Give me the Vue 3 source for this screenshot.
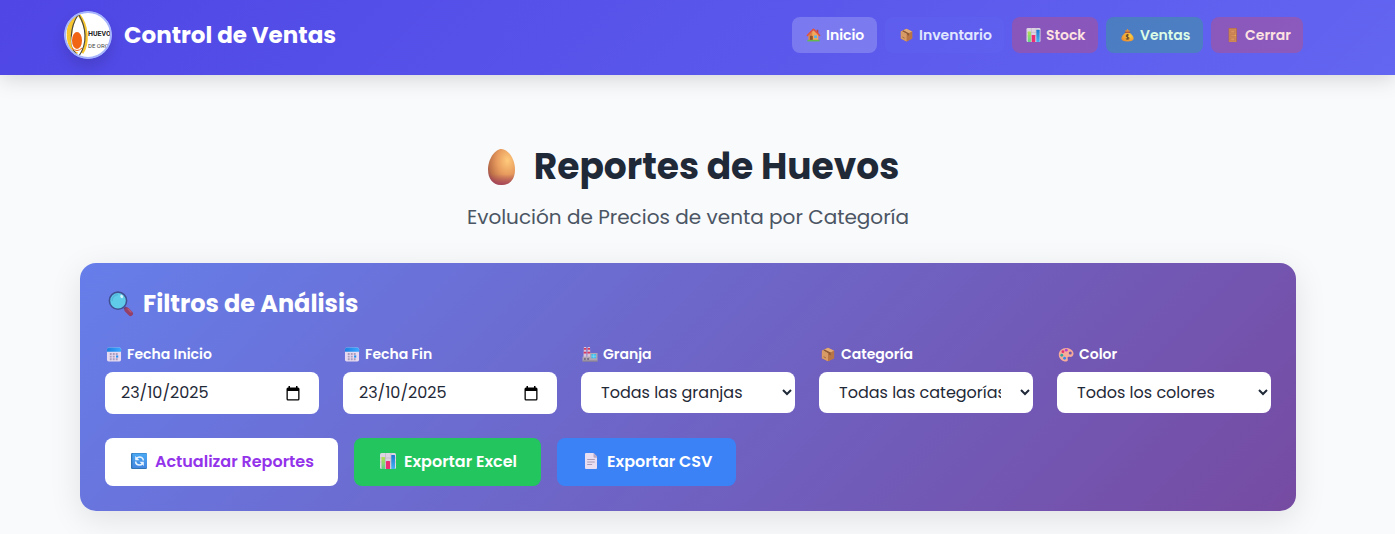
<script setup>
import { ref } from 'vue'

const links = [
  { id: 'home', label: 'Inicio', icon: 'house', kind: 'active' },
  { id: 'inventory', label: 'Inventario', icon: 'box', kind: 'plain' },
  { id: 'stock', label: 'Stock', icon: 'chart', kind: 'red' },
  { id: 'sales', label: 'Ventas', icon: 'money', kind: 'green' },
  { id: 'logout', label: 'Cerrar', icon: 'door', kind: 'red' },
]

const dates = ref([
  { id: 'start', label: 'Fecha Inicio', value: '23/10/2025' },
  { id: 'end', label: 'Fecha Fin', value: '23/10/2025' },
])

const selects = [
  { id: 'farm', label: 'Granja', icon: 'factory', option: 'Todas las granjas' },
  { id: 'category', label: 'Categoría', icon: 'box', option: 'Todas las categorías' },
  { id: 'color', label: 'Color', icon: 'palette', option: 'Todos los colores' },
]

const actions = [
  { label: 'Actualizar Reportes', icon: 'refresh', kind: 'white' },
  { label: 'Exportar Excel', icon: 'chart', kind: 'green' },
  { label: 'Exportar CSV', icon: 'page', kind: 'blue' },
]
</script>

<template>
  <div class="page">
    <svg class="sprite" aria-hidden="true">
      <defs>
        <radialGradient id="eggFill" cx="0.72" cy="0.32" r="0.8">
          <stop offset="0" stop-color="#ffcb7c" />
          <stop offset="0.5" stop-color="#e79a5d" />
          <stop offset="0.85" stop-color="#bd7148" />
          <stop offset="1" stop-color="#a5544f" />
        </radialGradient>
        <linearGradient id="eggShade" x1="0" y1="0" x2="0" y2="1">
          <stop offset="0.7" stop-color="#a33d60" stop-opacity="0" />
          <stop offset="1" stop-color="#a33d60" stop-opacity="0.8" />
        </linearGradient>
        <linearGradient id="greenBar" x1="0" y1="0" x2="0" y2="1">
          <stop offset="0" stop-color="#b5e04f" /><stop offset="1" stop-color="#5fd08a" />
        </linearGradient>
        <linearGradient id="blueBar" x1="0" y1="0" x2="0" y2="1">
          <stop offset="0" stop-color="#1b78d0" /><stop offset="1" stop-color="#46b4f4" />
        </linearGradient>
        <linearGradient id="calTop" x1="0" y1="0" x2="1" y2="0">
          <stop offset="0" stop-color="#1d7fe0" /><stop offset="1" stop-color="#3ba8ff" />
        </linearGradient>
        <linearGradient id="syncFill" x1="0" y1="0" x2="0" y2="1">
          <stop offset="0" stop-color="#4aa9f5" /><stop offset="1" stop-color="#4487e0" />
        </linearGradient>
        <radialGradient id="bagFill" cx="0.65" cy="0.4" r="0.7">
          <stop offset="0" stop-color="#ffd23e" /><stop offset="1" stop-color="#e78b32" />
        </radialGradient>
      </defs>
      <symbol id="i-house" viewBox="0 0 16 16">
        <path d="M11.500 2h2v4h-2z" fill="#b94a3d" />
        <path d="M2.500 7.500 8 2.500l5.500 5V14h-11z" fill="#f2a75d" />
        <path d="M2.500 7.500 6.500 4v10h-4z" fill="#d98245" />
        <path d="M1 8.500 7.500 1.800q.5-.5 1 0L15 8.500" fill="none" stroke="#e2533c" stroke-width="1.800" stroke-linecap="round" stroke-linejoin="round" />
        <path d="M4 9h3.200v5H4z" fill="#93532f" />
        <path d="M8.700 8.500h3.300v3H8.700z" fill="#55b5ea" />
        <path d="M1 13.500h14v1.800H1z" fill="#63b94c" />
      </symbol>
      <symbol id="i-box" viewBox="0 0 16 16">
        <path d="M8 .8 14.500 4v8L8 15.300 1.500 12V4z" fill="#c58550" />
        <path d="M8 .8 14.500 4 8 7.300 1.500 4z" fill="#e3ab76" />
        <path d="M8 7.300 14.500 4v8L8 15.300z" fill="#b97546" />
        <path d="M1.500 4 8 7.300v8L1.500 12z" fill="#d89b65" />
        <path d="m4.300 2.600 6.500 3.300v3l-2-1V6.800L3 3.700z" fill="#8e5834" />
        <path d="m3.300 10.300 2.500 1.300" stroke="#9f683e" />
      </symbol>
      <symbol id="i-chart" viewBox="0 0 16 16">
        <rect width="16" height="16" rx="1.500" fill="#ddd4e2" />
        <path d="M0 5h16M0 9h16M5.500 0v16M11 0v16" stroke="#b9aec4" stroke-width=".6" />
        <rect x="1.500" y="4" width="3.500" height="12" rx=".5" fill="url(#greenBar)" />
        <rect x="6" y="8" width="4" height="8" rx=".5" fill="#ec2f73" />
        <rect x="11.300" y="2" width="3.700" height="14" rx=".5" fill="url(#blueBar)" />
      </symbol>
      <symbol id="i-money" viewBox="0 0 16 16">
        <path d="M5 2.200 6.500 3 8 .8 9.500 3 11 2.200 9.800 5H6.200z" fill="#e98f31" />
        <path d="M6 5h4c2.600 1.600 5 4.100 5 7 0 2.400-2.300 3.300-7 3.300S1 14.400 1 12c0-2.900 2.400-5.400 5-7z" fill="url(#bagFill)" />
        <path d="M5.500 4.800h5" stroke="#a94b35" stroke-width="1.200" stroke-linecap="round" />
        <path d="M9.700 8.300C9 7.500 6.500 7.500 6.500 9s3.200.9 3.200 2.500-2.800 1.500-3.500.5M8 6.900v6.600" fill="none" stroke="#70512f" stroke-width="1.200" />
      </symbol>
      <symbol id="i-door" viewBox="0 0 16 16">
        <rect x="3.500" y="0" width="9.500" height="16" rx=".5" fill="#b06a4b" />
        <rect x="4.300" y=".8" width="7.900" height="15.200" fill="#d08a57" />
        <path d="M6 2.500h4.500v3H6zM6 7.500h4.500v2H6zM6 11.500h4.500v3H6z" fill="#d9945f" stroke="#b87149" stroke-width=".5" />
        <circle cx="11" cy="8.500" r=".7" fill="#ffc13b" />
      </symbol>
      <symbol id="i-search" viewBox="0 0 26 26">
        <path d="m16.500 16.500 3 3" stroke="#6b4170" stroke-width="3" />
        <path d="m19 19 3.500 3.500" stroke="#943f68" stroke-width="5" stroke-linecap="round" />
        <path d="m20 18 3 3" stroke="#b95b76" stroke-width="1.200" stroke-linecap="round" />
        <circle cx="10" cy="9.700" r="8.600" fill="#5fcbe8" stroke="#404f92" stroke-width="1.600" />
        <path d="M4 10c0-4 3-6.500 6-6.500" fill="none" stroke="#53b7dc" stroke-width="1.500" />
        <ellipse cx="13.700" cy="5.500" rx="1.300" ry="1.800" fill="#d2f5ff" transform="rotate(-30 13.700 5.500)" />
      </symbol>
      <symbol id="i-calendar" viewBox="0 0 16 16">
        <rect x=".5" y=".5" width="15" height="15" rx="1.800" fill="#e6d9f0" />
        <path d="M.5 5V2.500q0-2 2-2h11q2 0 2 2V5z" fill="url(#calTop)" />
        <path d="M3.500 6.500h2v2h-2zM6.700 6.500h2v2h-2zM9.900 6.500h2v2h-2zM3.500 9.300h2v2h-2zM6.700 9.300h2v2h-2zM3.500 12h2v2h-2zM6.700 12h2v2h-2zM9.900 12h2v2h-2z" fill="#a99dbf" />
        <path d="M10.200 9H12.500v2.300h-2.300z" fill="#248ef0" />
      </symbol>
      <symbol id="i-factory" viewBox="0 0 16 16">
        <path d="M1.500 0H4l.4 11H1zM5.500 0H8l.4 11H5z" fill="#dac4d7" />
        <path d="M1.500 1H4v2H1.500zM5.500 1H8v2H5.500zM1.300 5h2.900v2H1.300zM5.300 5h2.900v2H5.300z" fill="#d63860" />
        <path d="M0 10.500h8V6.500h8v9H0z" fill="#afa7b6" />
        <path d="M1.500 12h2v1.500h-2zM5 12h2v1.500H5z" fill="#6b6078" />
        <path d="M9.500 7.500h5v4.500h-5z" fill="#3ebced" />
        <path d="M12 7.500V12M9.500 9.800h5" stroke="#b0efff" stroke-width=".5" />
        <path d="M0 15h16" stroke="#7d7387" />
      </symbol>
      <symbol id="i-palette" viewBox="0 0 16 16">
        <path d="M8 1c4.500 0 8 2.700 8 6 0 2.600-1.800 4-4.500 3.500-1.600-.3-2.200.7-1.700 2 .5 1.500 0 3-1.800 3C4 15.500.3 12.300.3 8.200.3 4.200 3.700 1 8 1z" fill="#f6aa99" />
        <circle cx="12.500" cy="6.500" r="1.600" fill="#7054ad" />
        <circle cx="8.300" cy="3.400" r="1.500" fill="#b63fcb" />
        <circle cx="4.700" cy="5" r="1.500" fill="#df3472" />
        <circle cx="3.500" cy="8.800" r="1.500" fill="#2fa79e" />
        <circle cx="6.500" cy="12" r="1.500" fill="#3489ec" />
      </symbol>
      <symbol id="i-refresh" viewBox="0 0 16 16">
        <rect width="16" height="16" rx="1.200" fill="#3174b5" />
        <rect x="1.300" y=".5" width="14.700" height="14.500" rx="1" fill="url(#syncFill)" />
        <path d="M12.300 7.500C12.300 5 10.300 4 8.500 4 7.200 4 6.300 4.500 5.600 5.300M4.700 8.500c0 2.500 2 3.500 3.800 3.500 1.300 0 2.200-.5 2.900-1.300" fill="none" stroke="#e9f4ff" stroke-width="1.600" />
        <path d="M4.200 3v4.300h4.300zM12.800 13V8.700H8.500z" fill="#e9f4ff" />
      </symbol>
      <symbol id="i-page" viewBox="0 0 16 16">
        <path d="M2 1q0-1 1-1h7.500L14 3.500V15q0 1-1 1H3q-1 0-1-1z" fill="#e9def1" />
        <path d="M10.500 0 14 3.500v1.300h-2.500q-1 0-1-1z" fill="#b9a9c7" />
        <path d="M4.200 6.500h7.600M4.200 9h7.600M4.200 11.500h5" stroke="#a295b2" stroke-width=".9" />
      </symbol>
      <symbol id="i-egg" viewBox="0 0 27 36">
        <path d="M13.500 0C20 0 27 10 27 20.500 27 30 22 36 13.500 36S0 30 0 20.500C0 10 7 0 13.500 0z" fill="url(#eggFill)" />
        <path d="M13.500 0C20 0 27 10 27 20.500 27 30 22 36 13.500 36S0 30 0 20.500C0 10 7 0 13.500 0z" fill="url(#eggShade)" />
      </symbol>
    </svg>

    <header class="topbar">
      <div class="topbar-inner">
        <div class="brand">
          <svg class="logo" viewBox="0 0 48 48" role="img" aria-label="Huevo de Oro">
            <defs><clipPath id="logoClip"><circle cx="24" cy="24" r="22.500" /></clipPath></defs>
            <circle cx="24" cy="24" r="24" fill="#a5b4fc" />
            <g clip-path="url(#logoClip)">
              <path d="M0 0h48v48H0z" fill="#fff" />
              <path d="M8 6C4 12 2 18 3 28c1 7 4 12 9 16l2-2C7 34 6 20 13 5z" fill="#f7c62f" />
              <path d="M15 4c8 10 10 28 3 38" fill="none" stroke="#f7c62f" stroke-width="3" />
              <path d="M14 4C6 16 5 34 12 43M15 4c7 12 9 28 0 41" fill="none" stroke="#4b4943" stroke-width="1.200" />
              <ellipse cx="13" cy="30" rx="5.800" ry="11" fill="#fff" />
              <ellipse cx="13" cy="29.500" rx="5" ry="8.500" fill="#f06414" />
              <path d="M8 37q5 5 10 0" fill="none" stroke="#f06414" stroke-width="1" />
              <text x="24" y="25" class="logo-main">HUEVO</text>
              <text x="24" y="37" class="logo-sub">DE ORO</text>
            </g>
            <circle cx="24" cy="24" r="23" fill="none" stroke="#a5b4fc" stroke-width="2" />
          </svg>
          <span class="brand-name">Control de Ventas</span>
        </div>
        <nav class="nav">
          <a v-for="l in links" :key="l.id" href="#" class="nav-link" :class="'nav-' + l.kind">
            <svg class="nav-icon" aria-hidden="true"><use :href="'#i-' + l.icon" /></svg>{{ l.label }}
          </a>
        </nav>
      </div>
    </header>

    <main class="main">
      <div class="heading">
        <h1 class="title"><svg class="egg" aria-hidden="true"><use href="#i-egg" /></svg>Reportes de Huevos</h1>
        <p class="subtitle">Evolución de Precios de venta por Categoría</p>
      </div>

      <section class="card">
        <h2 class="card-title"><svg class="search" aria-hidden="true"><use href="#i-search" /></svg>Filtros de Análisis</h2>
        <div class="fields">
          <div v-for="d in dates" :key="d.id" class="field">
            <label class="label" :for="d.id"><svg class="label-icon" aria-hidden="true"><use href="#i-calendar" /></svg>{{ d.label }}</label>
            <div class="date">
              <input :id="d.id" v-model="d.value" class="date-input" type="text" />
              <button class="picker" type="button" aria-label="Abrir calendario">
                <svg class="picker-icon" viewBox="0 0 14 15" aria-hidden="true">
                  <path d="M2 1.500h10q1.500 0 1.500 1.500v10q0 1.500-1.500 1.500H2Q.5 14.500.5 13V3Q.5 1.500 2 1.500zM1.800 5v8.200h10.400V5z" fill="#000" fill-rule="evenodd" />
                  <path d="M2.500 0H4v2H2.500zM10 0h1.500v2H10z" fill="#000" />
                </svg>
              </button>
            </div>
          </div>
          <div v-for="s in selects" :key="s.id" class="field">
            <label class="label" :for="s.id"><svg class="label-icon" aria-hidden="true"><use :href="'#i-' + s.icon" /></svg>{{ s.label }}</label>
            <select :id="s.id" class="select"><option>{{ s.option }}</option></select>
          </div>
        </div>
        <div class="actions">
          <button v-for="a in actions" :key="a.label" type="button" class="btn" :class="'btn-' + a.kind">
            <svg class="btn-icon" aria-hidden="true"><use :href="'#i-' + a.icon" /></svg>{{ a.label }}
          </button>
        </div>
      </section>
    </main>
  </div>
</template>

<style>
body {
  background: #f8fafc;
}
</style>

<style scoped>
.page {
  min-height: 100vh;
  background: #f8fafc;
  color: #1f2937;
  font-family: Poppins, Inter, "Open Sans", sans-serif;
  font-size: 16px;
}
.page *,
.page {
  box-sizing: border-box;
}
.sprite {
  position: absolute;
  width: 0;
  height: 0;
}
.topbar {
  padding: 11px 19px 16px 0;
  background: linear-gradient(135deg, #4f46e5, #6366f1);
  box-shadow: 0 4px 20px rgba(0, 0, 0, 0.15);
}
.topbar-inner {
  display: flex;
  align-items: center;
  justify-content: space-between;
  max-width: 1280px;
  margin: 0 auto;
  padding: 0 25px 0 16px;
}
.brand {
  display: flex;
  align-items: center;
  gap: 12px;
}
.logo {
  width: 48px;
  height: 48px;
  border-radius: 50%;
  box-shadow: 0 8px 14px rgba(0, 0, 0, 0.12);
}
.logo-main {
  fill: #252525;
  font-family: Roboto, sans-serif;
  font-size: 7px;
  font-weight: 700;
}
.logo-sub {
  fill: #444;
  font-family: Roboto, sans-serif;
  font-size: 6px;
}
.brand-name {
  color: #fff;
  font-size: 23px;
  line-height: 32px;
  font-weight: 700;
}
.nav {
  display: grid;
  grid-template-columns: 85px 119px 86px 97px 92px;
  gap: 8px;
}
.nav-link {
  display: flex;
  align-items: center;
  height: 36px;
  padding: 0 0 0 14px;
  border-radius: 8px;
  font-size: 14px;
  font-weight: 600;
  text-decoration: none;
}
.nav-icon {
  width: 15px;
  height: 14px;
  margin-right: 5px;
}
.nav-active {
  background: rgba(255, 255, 255, 0.2);
  color: #fff;
}
.nav-plain {
  background: rgba(99, 102, 241, 0.3);
  color: #e0e7ff;
}
.nav-red {
  background: rgba(239, 68, 68, 0.3);
  color: #fee2e2;
}
.nav-green {
  background: rgba(34, 197, 94, 0.3);
  color: #dcfce7;
}
.main {
  max-width: 1299px;
  margin: 0 auto;
  padding: 64px 51px 23px 32px;
}
.heading {
  text-align: center;
}
.title {
  display: flex;
  align-items: center;
  justify-content: center;
  gap: 19px;
  margin: 0;
  padding-left: 11px;
  font-size: 36px;
  line-height: 56px;
  font-weight: 700;
}
.egg {
  width: 27px;
  height: 36px;
}
.subtitle {
  margin: 8px 0 32px;
  color: #4b5563;
  font-size: 20px;
  line-height: 28px;
}
.card {
  padding: 25px;
  border-radius: 16px;
  background: linear-gradient(135deg, #667eea 0%, #764ba2 100%);
  box-shadow: 0 8px 32px rgba(0, 0, 0, 0.1);
}
.card-title {
  display: flex;
  align-items: center;
  gap: 9px;
  margin: 0 0 24px;
  padding-left: 3px;
  color: #fff;
  font-size: 24px;
  line-height: 32px;
  font-weight: 700;
}
.search {
  width: 26px;
  height: 26px;
}
.fields {
  display: grid;
  grid-template-columns: repeat(5, minmax(0, 1fr));
  gap: 24px;
}
.label {
  display: flex;
  align-items: center;
  margin-bottom: 8px;
  padding-left: 1px;
  color: #fff;
  font-size: 14px;
  line-height: 20px;
  font-weight: 600;
}
.label-icon {
  width: 16px;
  height: 15px;
  margin-right: 5px;
}
.date {
  display: flex;
  align-items: center;
  height: 42px;
  padding: 0 16px;
  border-radius: 8px;
  background: #fff;
}
.date-input {
  flex: 1;
  min-width: 0;
  padding: 0 0 2px;
  border: 0;
  outline: 0;
  background: none;
  color: #1f2937;
  font: inherit;
}
.picker {
  display: flex;
  padding: 0 3px;
  border: 0;
  background: none;
}
.picker-icon {
  width: 14px;
  height: 15px;
}
.select {
  display: block;
  width: 100%;
  height: 41px;
  padding: 0 16px;
  border: 0;
  border-radius: 8px;
  background-color: #fff;
  color: #1f2937;
  font: inherit;
}
.actions {
  display: flex;
  gap: 16px;
  margin-top: 24px;
}
.btn {
  display: flex;
  align-items: center;
  height: 48px;
  padding: 0 24px 2px 26px;
  border: 0;
  border-radius: 8px;
  color: #fff;
  font: inherit;
  font-weight: 600;
}
.btn-icon {
  width: 16px;
  height: 16px;
  margin-right: 8px;
}
.btn-white {
  background: #fff;
  color: #9333ea;
}
.btn-green {
  background: #22c55e;
}
.btn-blue {
  background: #3b82f6;
}
</style>
